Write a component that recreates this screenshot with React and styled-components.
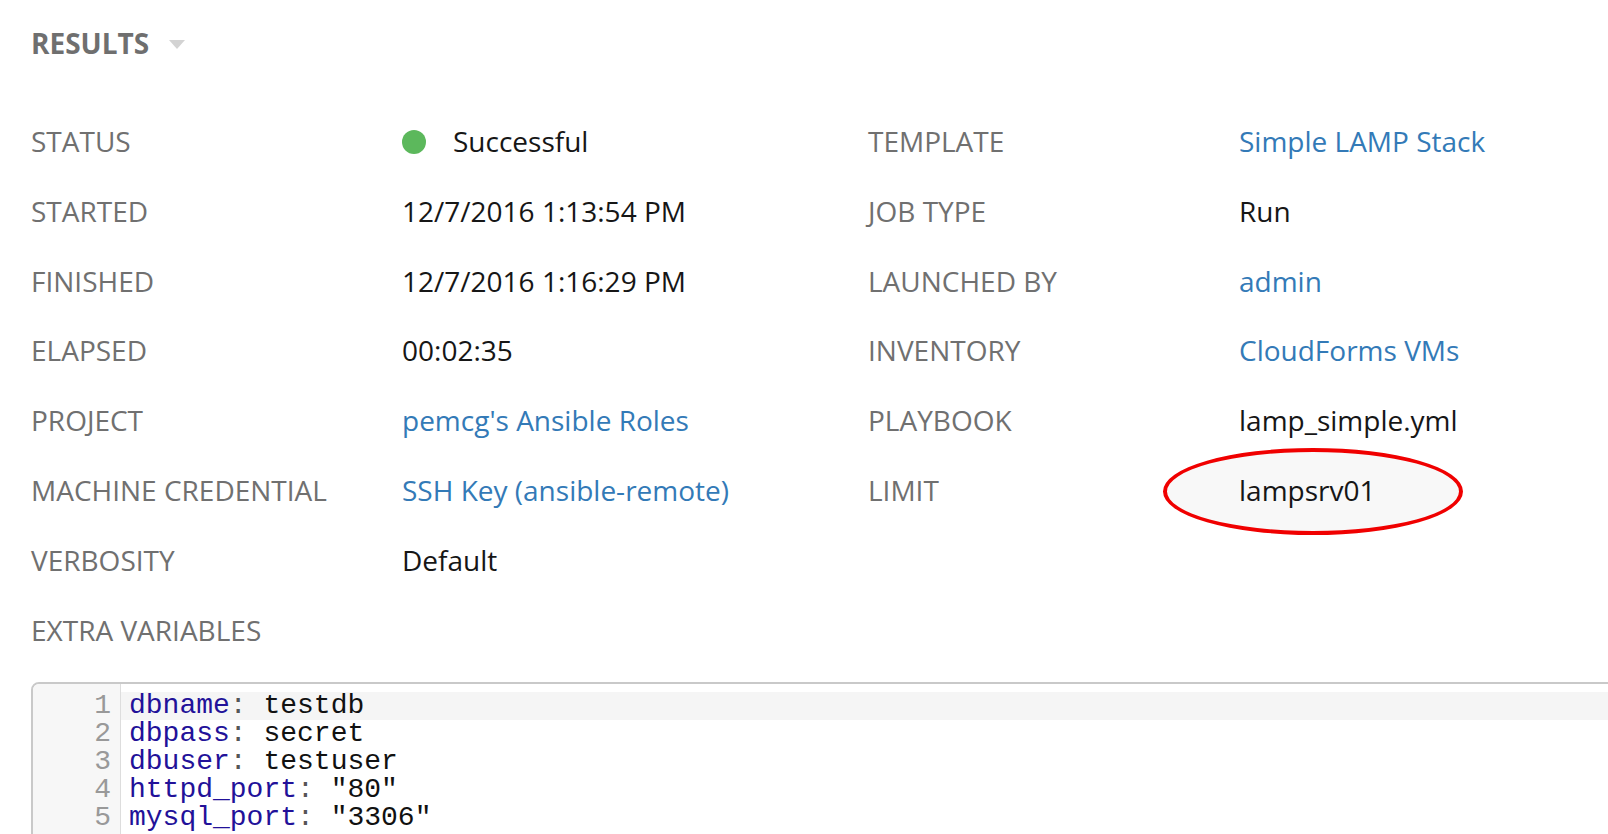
import styled, { createGlobalStyle } from "styled-components";

const GlobalStyle = createGlobalStyle`
  html, body {
    margin: 0;
    padding: 0;
    background: #ffffff;
    overflow: hidden;
  }
  body {
    font-family: "Open Sans", "Noto Sans", sans-serif;
  }
`;

const Page = styled.div`
  width: 1608px;
  height: 834px;
  padding: 8px 0 0 31px;
  box-sizing: border-box;
  overflow: hidden;
`;

const Header = styled.div`
  display: flex;
  align-items: center;
  height: 70px;
  margin-bottom: 29px;
`;

const HeaderTitle = styled.h2`
  margin: 0;
  font-size: 28px;
  font-weight: 700;
  color: #6f6f6f;
  line-height: 70px;
`;

const Caret = styled.span`
  display: inline-block;
  margin-left: 20px;
  margin-top: 2px;
  width: 0;
  height: 0;
  border-left: 8.5px solid transparent;
  border-right: 8.5px solid transparent;
  border-top: 9px solid #d3d3d3;
`;

const Details = styled.div`
  display: grid;
  grid-template-columns: 371px 466px 371px 1fr;
  grid-auto-rows: 69.8px;
  align-items: center;
  font-size: 28px;
  line-height: 69.8px;
`;

const Label = styled.div`
  color: #707070;
  white-space: nowrap;
`;

const Value = styled.div`
  position: relative;
  color: #161616;
  white-space: nowrap;
  display: flex;
  align-items: center;
`;

const Link = styled.a`
  color: #337ab7;
  text-decoration: none;
`;

const StatusDot = styled.span`
  width: 24px;
  height: 24px;
  border-radius: 50%;
  background: #5cb85c;
  margin-right: 27px;
`;

const Annotation = styled.span`
  position: absolute;
  left: -76px;
  top: -8px;
  width: 300px;
  height: 87px;
  box-sizing: border-box;
  border: 4px solid #f00000;
  border-radius: 50%;
  background: #f8f8f8;
  z-index: 0;
`;

const AnnotatedText = styled.span`
  position: relative;
  z-index: 1;
`;

const Editor = styled.div`
  margin-top: 17px;
  width: 1700px;
  height: 240px;
  border: 2px solid #c9c9c9;
  border-radius: 8px;
  display: flex;
  background: #ffffff;
  overflow: hidden;
  font-family: "Liberation Mono", "Courier New", monospace;
  font-size: 28px;
  line-height: 28px;
`;

const Gutter = styled.div`
  width: 88px;
  padding: 8px 9px 0 0;
  box-sizing: border-box;
  background: #f7f7f7;
  border-right: 1px solid #dddddd;
  text-align: right;
  color: #999999;
`;

const Lines = styled.div`
  flex: 1;
  padding-top: 8px;
`;

const Line = styled.div`
  padding-left: 8px;
  color: #111111;
  white-space: pre;
  background: ${(p) => (p.$active ? "#f5f5f5" : "transparent")};
`;

const Key = styled.span`
  color: #221199;
`;

const Colon = styled.span`
  color: #555555;
`;

const rows = [
  ["STATUS", "status", "TEMPLATE", { link: "Simple LAMP Stack" }],
  ["STARTED", "12/7/2016 1:13:54 PM", "JOB TYPE", "Run"],
  ["FINISHED", "12/7/2016 1:16:29 PM", "LAUNCHED BY", { link: "admin" }],
  ["ELAPSED", "00:02:35", "INVENTORY", { link: "CloudForms VMs" }],
  ["PROJECT", { link: "pemcg's Ansible Roles" }, "PLAYBOOK", "lamp_simple.yml"],
  ["MACHINE CREDENTIAL", { link: "SSH Key (ansible-remote)" }, "LIMIT", "limit"],
];

const code = [
  ["dbname", "testdb"],
  ["dbpass", "secret"],
  ["dbuser", "testuser"],
  ["httpd_port", "\"80\""],
  ["mysql_port", "\"3306\""],
];

const renderValue = (v) => {
  if (v === "status") {
    return (
      <>
        <StatusDot />
        Successful
      </>
    );
  }
  if (v === "limit") {
    return (
      <>
        <Annotation />
        <AnnotatedText>lampsrv01</AnnotatedText>
      </>
    );
  }
  if (typeof v === "object") return <Link href="#">{v.link}</Link>;
  return v;
};

const App = () => {
  return (
    <Page>
      <GlobalStyle />
      <Header>
        <HeaderTitle>RESULTS</HeaderTitle>
        <Caret />
      </Header>
      <Details>
        {rows.map((r) => (
          <>
            <Label key={r[0]}>{r[0]}</Label>
            <Value>{renderValue(r[1])}</Value>
            <Label>{r[2]}</Label>
            <Value>{renderValue(r[3])}</Value>
          </>
        ))}
        <Label>VERBOSITY</Label>
        <Value>Default</Value>
        <div />
        <div />
        <Label>EXTRA VARIABLES</Label>
      </Details>
      <Editor>
        <Gutter>
          {code.map((_, i) => (
            <div key={i}>{i + 1}</div>
          ))}
        </Gutter>
        <Lines>
          {code.map(([k, v], i) => (
            <Line key={k} $active={i === 0}>
              <Key>{k}</Key>
              <Colon>:</Colon> {v}
            </Line>
          ))}
        </Lines>
      </Editor>
    </Page>
  );
};

export default App;
